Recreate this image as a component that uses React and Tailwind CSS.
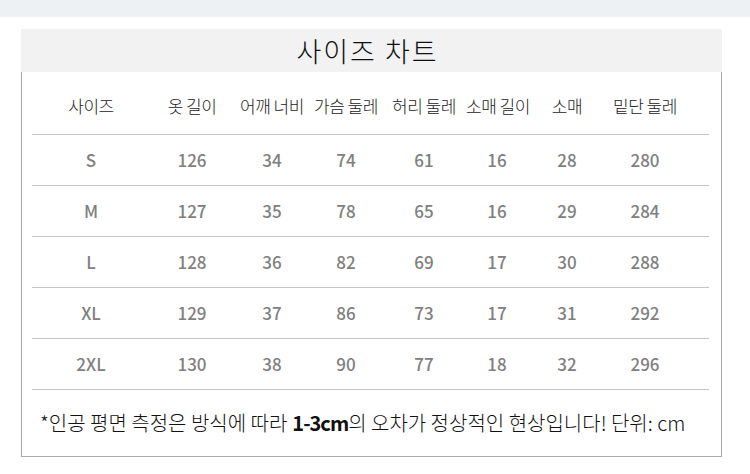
const headers = ["사이즈", "옷 길이", "어깨 너비", "가슴 둘레", "허리 둘레", "소매 길이", "소매", "밑단 둘레"];

const rows = [
  ["S", 126, 34, 74, 61, 16, 28, 280],
  ["M", 127, 35, 78, 65, 16, 29, 284],
  ["L", 128, 36, 82, 69, 17, 30, 288],
  ["XL", 129, 37, 86, 73, 17, 31, 292],
  ["2XL", 130, 38, 90, 77, 18, 32, 296],
];

const cols = "grid grid-cols-[118px_84px_76px_72px_84px_62px_78px_78px]";

const App = () => {
  return (
    <div className="w-[750px] h-[474px] bg-white font-['Noto_Sans_CJK_KR','Noto_Sans',sans-serif] overflow-hidden">
      <div className="h-[17px] bg-[#eef1f4]" />
      <div className="mx-[21px] mt-[12px] w-[701px]">
        <div className="h-[43px] bg-[#f2f2f2] flex items-center justify-center pr-[8px]">
          <h1 className="text-[27px] leading-none font-light text-[#111] tracking-[2px]">사이즈 차트</h1>
        </div>
        <div className="border-x border-b border-[#aaa] pl-[10px] pr-[12px]">
          <div className={`${cols} h-[62px] items-center pt-[6px] text-[17px] font-light text-[#222]`}>
            {headers.map((h) => (
              <div key={h} className="text-center whitespace-nowrap tracking-[-0.5px]">
                {h}
              </div>
            ))}
          </div>
          {rows.map((row) => (
            <div
              key={row[0]}
              className={`${cols} h-[51px] items-center border-t border-[#c4c4c4] text-[17px] font-medium text-[#808080]`}
            >
              {row.map((v, i) => (
                <div key={i} className="text-center">
                  {v}
                </div>
              ))}
            </div>
          ))}
          <div className="h-[67px] flex items-center border-t border-[#c4c4c4] pl-[8px] text-[20px] font-light text-[#111] whitespace-nowrap">
            *인공 평면 측정은 방식에 따라 <span className="font-semibold ml-[5px] tracking-[-1px]">1-3cm</span>의 오차가 정상적인 현상입니다! 단위: cm
          </div>
        </div>
      </div>
    </div>
  );
};

export default App;
